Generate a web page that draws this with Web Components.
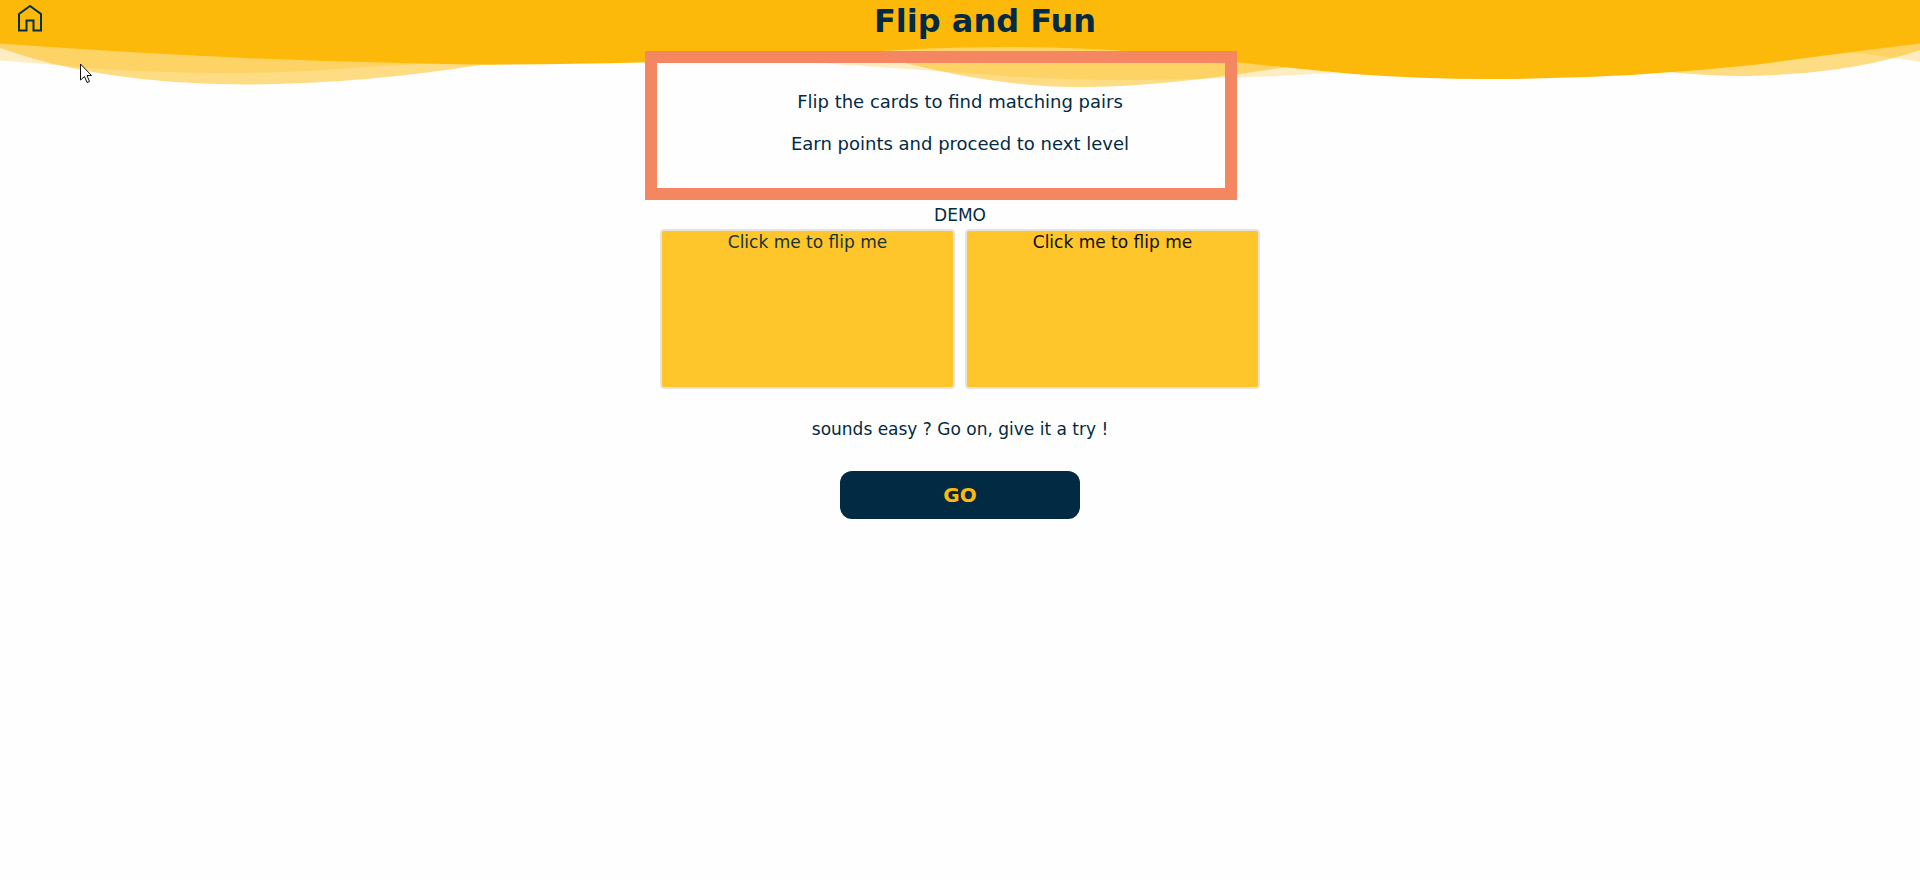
<!DOCTYPE html>
<html lang="en">
<head>
<meta charset="utf-8">
<title>Flip and Fun</title>
<style>
  body { margin: 0; background: #fefefe; color: #022b43; font: 17px/20px "DejaVu Sans", sans-serif; }
</style>
</head>
<body>
<flip-app></flip-app>
<script>
const define = (name, html) => {
  const template = document.createElement('template');
  template.innerHTML = html;
  customElements.define(name, class extends HTMLElement {
    constructor() {
      super();
      this.attachShadow({ mode: 'open' }).append(template.content.cloneNode(true));
    }
  });
};

define('wave-backdrop', `
<style>
  :host { display: block; position: absolute; inset: 0 0 auto 0; height: 90px; z-index: -1; }
  svg { display: block; width: 100%; height: 100%; fill: #fdb90a; }
</style>
<svg viewBox="0 0 1920 90" preserveAspectRatio="none" aria-hidden="true">
  <path fill-opacity=".24" d="M0 0V60.500Q50 64 100 69Q230 77 340 69Q400 64 480 62C650 57 740 58 848 65Q950 72 990 75Q1060 80 1140 80Q1240 79 1330 73Q1500 62 1600 54Q1760 42 1848 52Q1890 57 1920 62V0Z"/>
  <path fill-opacity=".5" d="M0 0V48Q100 84 245 84.500Q360 84 480 65Q620 42 760 44Q840 46 905 63Q1000 87 1080 87Q1160 87 1280 68Q1430 48 1540 58Q1630 68 1669 72Q1710 76 1747 76Q1850 74 1920 50V0Z"/>
  <path d="M0 0V43.500Q250 62 490 64.700Q690 64 850 53Q1010 41 1150 53Q1240 63 1353 74Q1420 79 1489 79Q1620 79 1753 65Q1850 52 1920 43.500V0Z"/>
</svg>`);

define('app-header', `
<style>
  :host { display: block; }
  header { display: flex; align-items: center; height: 42px; }
  a { display: flex; margin: 0 0 6px 14px; color: #062f40; }
  h1 { flex: 1; margin: 0 0 0 4px; text-align: center; font-size: 32px; line-height: 40px; font-weight: bold; }
</style>
<header>
  <a href="#" aria-label="Home">
    <svg width="32" height="32" viewBox="0 0 32 32" fill="none" stroke="currentColor" stroke-width="2"><path d="M5 28.500V12L16 4L27 12V28.500H19.500V18.500H12.500V28.500Z"/></svg>
  </a>
  <h1><slot></slot></h1>
</header>`);

define('intro-rules', `
<style>
  :host { display: flex; flex-direction: column; gap: 22px; position: relative; text-align: center; font-size: 18px; }
  .frame { position: absolute; inset: -41px 23px -46px -15px; border: 12px solid #f58662; pointer-events: none; }
  ::slotted(p) { margin: 0; }
</style>
<slot></slot><div class="frame"></div>`);

define('flip-card', `
<style>
  :host { display: block; flex: 1; color: #153431; line-height: 22px; }
  :host([dark]) { color: #110a05; }
  button { display: block; width: 100%; height: 160px; padding: 0; border: 2px solid #e9e3dc; border-radius: 4px;
    background: #fec62a; color: inherit; font: inherit; cursor: pointer; }
  span { display: block; height: 100%; }
</style>
<button type="button"><span><slot></slot></span></button>`);

define('go-button', `
<style>
  :host { display: block; width: 240px; }
  button { width: 100%; height: 48px; padding: 0; border: 0; border-radius: 12px; background: #022b43; color: #fdb90f;
    font: bold 20px/24px "DejaVu Sans", sans-serif; cursor: pointer; }
</style>
<button type="button"><slot></slot></button>`);

define('mouse-pointer', `
<style>
  :host { display: block; position: absolute; left: 80px; top: 63px; pointer-events: none; }
  svg { display: block; }
</style>
<svg width="14" height="22" viewBox="0 0 14 22"><path d="M.5 1V17L4.500 13.500L7 19.500L9.500 18.500L7 12.500H11.500Z" fill="#fff" stroke="#111"/></svg>`);

define('flip-app', `
<style>
  :host { display: block; position: relative; z-index: 0; }
  main { display: flex; flex-direction: column; align-items: center; max-width: 600px; margin: 0 auto; padding-top: 50px; text-align: center; }
  intro-rules, .cards { width: 100%; }
  h2 { margin: 51px 0 4px; font-size: 17px; line-height: 20px; font-weight: normal; }
  .cards { display: flex; gap: 10px; }
  .invite { margin: 30px 0 32px; }
</style>
<wave-backdrop></wave-backdrop>
<app-header>Flip and Fun</app-header>
<main>
  <intro-rules>
    <p>Flip the cards to find matching pairs</p>
    <p>Earn points and proceed to next level</p>
  </intro-rules>
  <h2>DEMO</h2>
  <div class="cards">
    <flip-card>Click me to flip me</flip-card>
    <flip-card dark>Click me to flip me</flip-card>
  </div>
  <p class="invite">sounds easy ? Go on, give it a try !</p>
  <go-button>GO</go-button>
</main>
<mouse-pointer></mouse-pointer>`);
</script>
</body>
</html>
